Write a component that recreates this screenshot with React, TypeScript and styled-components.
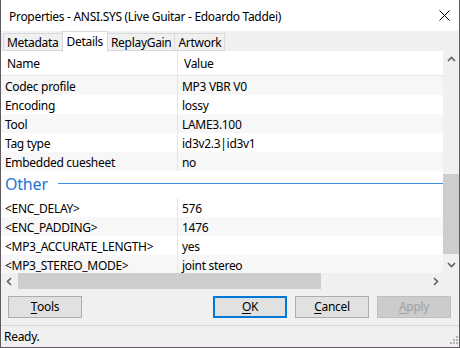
import styled, { createGlobalStyle } from "styled-components";

const GlobalStyle = createGlobalStyle`
  html, body {
    margin: 0;
    padding: 0;
    background: #ffffff;
  }
  body {
    font-family: "Noto Sans", "Open Sans", sans-serif;
    font-size: 12px;
    letter-spacing: -0.3px;
    color: #000;
  }
`;

interface Row {
  name: string;
  value: string;
}

const general: Row[] = [
  { name: "Codec profile", value: "MP3 VBR V0" },
  { name: "Encoding", value: "lossy" },
  { name: "Tool", value: "LAME3.100" },
  { name: "Tag type", value: "id3v2.3|id3v1" },
  { name: "Embedded cuesheet", value: "no" },
];

const other: Row[] = [
  { name: "<ENC_DELAY>", value: "576" },
  { name: "<ENC_PADDING>", value: "1476" },
  { name: "<MP3_ACCURATE_LENGTH>", value: "yes" },
  { name: "<MP3_STEREO_MODE>", value: "joint stereo" },
];

const tabs = ["Metadata", "Details", "ReplayGain", "Artwork"];

const Chevron = ({ dir }: { dir: "up" | "down" | "left" | "right" }) => {
  const rot = { up: 0, right: 90, down: 180, left: 270 }[dir];
  return (
    <svg width="9" height="9" viewBox="0 0 9 9">
      <path
        d="M1 6 L4.5 2.5 L8 6"
        fill="none"
        stroke="#606060"
        strokeWidth="1.6"
        transform={`rotate(${rot} 4.5 4.5)`}
      />
    </svg>
  );
};

const App = () => {
  return (
    <>
      <GlobalStyle />
      <Window>
        <TitleBar>
          <span className="title">
            Properties - ANSI.SYS (Live Guitar - Edoardo Taddei)
          </span>
          <svg width="11" height="11" viewBox="0 0 11 11">
            <path d="M0.5 0.5 L10.5 10.5 M10.5 0.5 L0.5 10.5" stroke="#000" strokeWidth="1" />
          </svg>
        </TitleBar>

        <TabStrip>
          {tabs.map((t) => (
            <Tab key={t} active={t === "Details"}>
              {t}
            </Tab>
          ))}
        </TabStrip>

        <ListArea>
          <ListMain>
            <List>
              <HeaderRow>
                <NameCell className="head">Name</NameCell>
                <ValueCell className="head">Value</ValueCell>
              </HeaderRow>
              {general.map((r, i) => (
                <DataRow key={r.name} shaded={i % 2 === 0}>
                  <NameCell>{r.name}</NameCell>
                  <ValueCell>{r.value}</ValueCell>
                </DataRow>
              ))}
              <GroupRow>
                <span>Other</span>
                <div className="rule" />
              </GroupRow>
              {other.map((r, i) => (
                <DataRow key={r.name} shaded={i % 2 === 1}>
                  <NameCell>{r.name}</NameCell>
                  <ValueCell>{r.value}</ValueCell>
                </DataRow>
              ))}
            </List>
            <VScroll>
              <ArrowBox>
                <Chevron dir="up" />
              </ArrowBox>
              <div className="track">
                <div className="thumb" />
              </div>
              <ArrowBox>
                <Chevron dir="down" />
              </ArrowBox>
            </VScroll>
          </ListMain>
          <HScrollRow>
            <HScroll>
              <ArrowBox>
                <Chevron dir="left" />
              </ArrowBox>
              <div className="track">
                <div className="thumb" />
              </div>
              <ArrowBox>
                <Chevron dir="right" />
              </ArrowBox>
            </HScroll>
            <Corner />
          </HScrollRow>
        </ListArea>

        <ButtonBar>
          <Button>
            <u>T</u>ools
          </Button>
          <div className="spacer" />
          <Button variant="default">
            <u>O</u>K
          </Button>
          <Button>
            <u>C</u>ancel
          </Button>
          <Button variant="disabled">
            <u>A</u>pply
          </Button>
        </ButtonBar>

        <StatusBar>
          <span>Ready.</span>
          <svg className="grip" width="10" height="10" viewBox="0 0 10 10">
            {[
              [8, 0],
              [8, 3],
              [8, 6],
              [5, 3],
              [5, 6],
              [2, 6],
            ].map(([x, y]) => (
              <rect key={`${x}-${y}`} x={x} y={y} width="2" height="2" fill="#b4b4b4" />
            ))}
          </svg>
        </StatusBar>
      </Window>
    </>
  );
};

export default App;

const Window = styled.div`
  width: 460px;
  height: 348px;
  box-sizing: border-box;
  border-left: 1px solid #5f5a60;
  border-right: 1px solid #5f5a60;
  border-bottom: 1px solid #5f5a60;
  background: #f0f0f0;
  display: flex;
  flex-direction: column;
  overflow: hidden;
`;

const TitleBar = styled.div`
  height: 31px;
  flex: none;
  background: #ffffff;
  display: flex;
  align-items: center;
  padding-left: 8px;
  padding-right: 9px;

  .title {
    flex: 1;
    font-size: 12px;
    padding-top: 1px;
    white-space: nowrap;
  }
`;

const TabStrip = styled.div`
  height: 20px;
  flex: none;
  display: flex;
  align-items: flex-end;
  padding-left: 3px;
  background: #f0f0f0;
`;

const Tab = styled.div<{ active?: boolean }>`
  box-sizing: border-box;
  height: ${(p) => (p.active ? "21px" : "18px")};
  margin-bottom: ${(p) => (p.active ? "-1px" : "0")};
  padding: 0 ${(p) => (p.active ? "4px" : "3px")};
  padding-bottom: ${(p) => (p.active ? "2px" : "0")};
  display: flex;
  align-items: center;
  border: 1px solid #d9d9d9;
  border-bottom: ${(p) => (p.active ? "none" : "1px solid #d9d9d9")};
  margin-left: -1px;
  background: ${(p) => (p.active ? "#ffffff" : "#f0f0f0")};
  position: relative;
  z-index: ${(p) => (p.active ? 1 : 0)};
  font-size: 12px;
  white-space: nowrap;
`;

const ListArea = styled.div`
  flex: none;
  display: flex;
  flex-direction: column;
  background: #ffffff;
`;

const ListMain = styled.div`
  display: flex;
  height: 222px;
`;

const List = styled.div`
  flex: 1;
  display: flex;
  flex-direction: column;
  background: #ffffff;
  overflow: hidden;
`;

const HeaderRow = styled.div`
  height: 24px;
  flex: none;
  display: flex;
  align-items: center;
  border-bottom: 1px solid #e5e5e5;
`;

const DataRow = styled.div<{ shaded?: boolean }>`
  height: 19px;
  flex: none;
  display: flex;
  align-items: center;
  background: ${(p) => (p.shaded ? "#f7f7f7" : "#ffffff")};
`;

const NameCell = styled.div`
  box-sizing: border-box;
  width: 177px;
  height: 100%;
  display: flex;
  align-items: center;
  padding-left: 4px;
  padding-top: 1px;
  border-right: 1px solid #e5e5e5;
  white-space: nowrap;

  &.head {
    padding-left: 6px;
  }
`;

const ValueCell = styled.div`
  flex: 1;
  padding-left: 4px;
  padding-top: 1px;
  white-space: nowrap;

  &.head {
    padding-left: 6px;
  }
`;

const GroupRow = styled.div`
  height: 27px;
  flex: none;
  display: flex;
  align-items: center;
  padding-left: 4px;
  gap: 10px;

  span {
    font-size: 16px;
    letter-spacing: -0.2px;
    color: #1e72d6;
    line-height: 1;
    padding-bottom: 1px;
  }

  .rule {
    flex: 1;
    height: 1px;
    background: #3b8ee3;
    margin-bottom: 2px;
  }
`;

const ArrowBox = styled.div`
  width: 16px;
  height: 17px;
  flex: none;
  display: flex;
  align-items: center;
  justify-content: center;
`;

const VScroll = styled.div`
  width: 16px;
  flex: none;
  display: flex;
  flex-direction: column;
  background: #f0f0f0;

  .track {
    flex: 1;
    display: flex;
    flex-direction: column;
    justify-content: flex-end;
    padding-bottom: 2px;
  }

  .thumb {
    height: 80px;
    background: #cdcdcd;
  }
`;

const HScrollRow = styled.div`
  height: 16px;
  flex: none;
  display: flex;
`;

const HScroll = styled.div`
  flex: 1;
  display: flex;
  background: #f0f0f0;

  ${ArrowBox} {
    height: 16px;
  }

  .track {
    flex: 1;
    display: flex;
    padding-left: 1px;
  }

  .thumb {
    width: 303px;
    background: #cdcdcd;
  }
`;

const Corner = styled.div`
  width: 16px;
  background: #f0f0f0;
`;

const ButtonBar = styled.div`
  height: 35px;
  flex: none;
  display: flex;
  align-items: center;
  gap: 8px;
  padding: 0 8px 1px 7px;
  border-bottom: 1px solid #d7d7d7;

  .spacer {
    flex: 1;
  }
`;

const Button = styled.div<{ variant?: "default" | "disabled" }>`
  box-sizing: border-box;
  width: 74px;
  height: 22px;
  display: flex;
  align-items: center;
  justify-content: center;
  font-size: 12px;
  background: ${(p) => (p.variant === "disabled" ? "#cccccc" : "#e1e1e1")};
  color: ${(p) => (p.variant === "disabled" ? "#a0a0a0" : "#000")};
  border: ${(p) =>
    p.variant === "default"
      ? "2px solid #0078d7"
      : p.variant === "disabled"
      ? "1px solid #bfbfbf"
      : "1px solid #adadad"};

  u {
    text-decoration-thickness: 1px;
    text-underline-offset: 2px;
  }
`;

const StatusBar = styled.div`
  flex: 1;
  display: flex;
  align-items: center;
  justify-content: space-between;
  padding-left: 3px;
  padding-right: 1px;

  .grip {
    align-self: flex-end;
    margin-bottom: 1px;
  }
`;
